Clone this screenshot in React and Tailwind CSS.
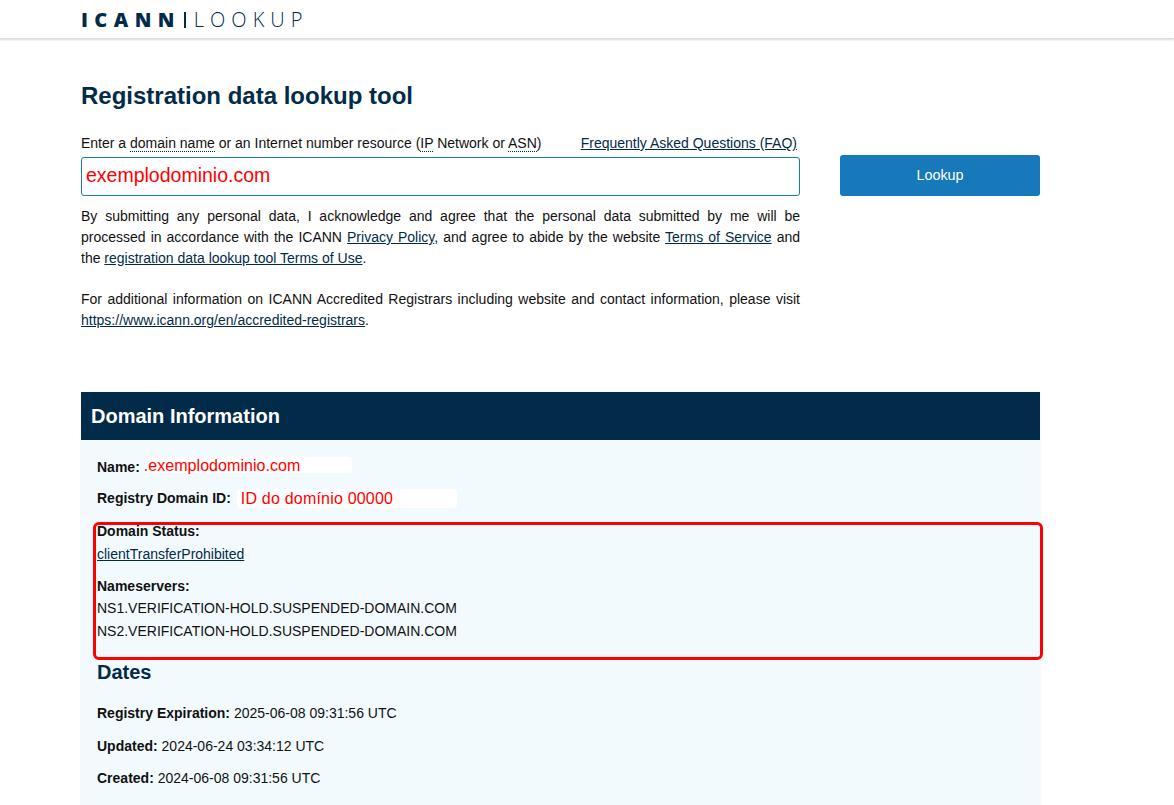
export default function App() {
  const link = "underline text-[#022b49]";
  const abbr = "border-b border-dotted border-[#022b49]";
  return (
    <div className="h-[805px] overflow-hidden bg-white font-['Liberation_Sans',Arial,sans-serif] text-[14px] leading-[21px] text-[#111]">
      <header className="h-[39px] border-b border-[#ddd] bg-white shadow-[0_1px_2px_rgba(0,0,0,0.15)]">
        <div className="ml-[81px] flex h-[38px] items-center pt-[2px] text-[#022b49] font-['Open_Sans',sans-serif] text-[20px] leading-none">
          <span className="font-extrabold tracking-[6.4px]">ICANN</span>
          <span className="mx-[3px] h-[16px] w-[2px] bg-[#022b49]"></span>
          <span className="ml-[5px] font-light tracking-[6px]">LOOKUP</span>
        </div>
      </header>
      <main className="ml-[81px] w-[959px]">
        <h1 className="mt-[42px] text-[24px] leading-[30px] font-bold text-[#022b49]">Registration data lookup tool</h1>
        <div className="mt-[22px] flex justify-between">
          <div className="w-[719px]">
            <div className="flex justify-between pr-[3px]">
              <span>Enter a <span className={abbr}>domain name</span> or an Internet number resource (<span className={abbr}>IP</span> Network or <span className={abbr}>ASN</span>)</span>
              <a className={link}>Frequently Asked Questions (FAQ)</a>
            </div>
            <div className="mt-[3px] flex h-[39px] items-center rounded-[3px] border border-[#1778ba] pb-[2px] pl-[4px] text-[19.5px] text-[#ff0000]">exemplodominio.com</div>
            <p className="mt-[10px] text-justify">By submitting any personal data, I acknowledge and agree that the personal data submitted by me will be processed in accordance with the ICANN <a className={link}>Privacy Policy</a>, and agree to abide by the website <a className={link}>Terms of Service</a> and the <a className={link}>registration data lookup tool Terms of Use</a>.</p>
            <p className="mt-[20px] text-justify">For additional information on ICANN Accredited Registrars including website and contact information, please visit <a className={link}>https://www.icann.org/en/accredited-registrars</a>.</p>
          </div>
          <button className="mt-[22px] h-[41px] w-[200px] rounded-[3px] bg-[#1778ba] text-[14.4px] text-white">Lookup</button>
        </div>
        <section className="relative mt-[61px] h-[500px] bg-[#f2fafe] shadow-[0_0_2px_rgba(0,0,0,0.08)]">
          <h2 className="flex h-[48px] items-center bg-[#022b49] pl-[10px] text-[20px] font-bold text-white">Domain Information</h2>
          <div className="pl-[16px]">
            <div className="mt-[17px] flex h-[16px] items-center">
              <b className="mt-[4px]">Name:</b>
              <span className="ml-[5px] flex h-[16px] w-[207px] items-center rounded-[4px] bg-white text-[16px] text-[#ff0000]"><span className="-ml-[1px] tracking-[0.05px]">.exemplodominio.com</span></span>
            </div>
            <div className="mt-[16px] flex h-[19px] items-center">
              <b>Registry Domain ID:</b>
              <span className="ml-[6px] flex h-[19px] w-[220px] items-center rounded-[4px] bg-white pl-[4px] text-[16px] tracking-[0.2px] text-[#ff0000]">ID do domínio 00000</span>
            </div>
            <div className="mt-[13px] font-bold">Domain Status:</div>
            <div className="mt-[2px]"><a className={link}>clientTransferProhibited</a></div>
            <div className="mt-[11px] font-bold">Nameservers:</div>
            <div className="mt-[1px]">NS1.VERIFICATION-HOLD.SUSPENDED-DOMAIN.COM</div>
            <div className="mt-[2px]">NS2.VERIFICATION-HOLD.SUSPENDED-DOMAIN.COM</div>
            <h3 className="mt-[18px] text-[20px] leading-[24px] font-bold text-[#022b49]">Dates</h3>
            <div className="mt-[19px]"><b>Registry Expiration:</b> 2025-06-08 09:31:56 UTC</div>
            <div className="mt-[12px]"><b>Updated:</b> 2024-06-24 03:34:12 UTC</div>
            <div className="mt-[11px]"><b>Created:</b> 2024-06-08 09:31:56 UTC</div>
          </div>
          <div className="absolute top-[130px] left-[12px] h-[138px] w-[950px] rounded-[6px] border-[3px] border-[#ff0000]"></div>
        </section>
      </main>
    </div>
  );
}
